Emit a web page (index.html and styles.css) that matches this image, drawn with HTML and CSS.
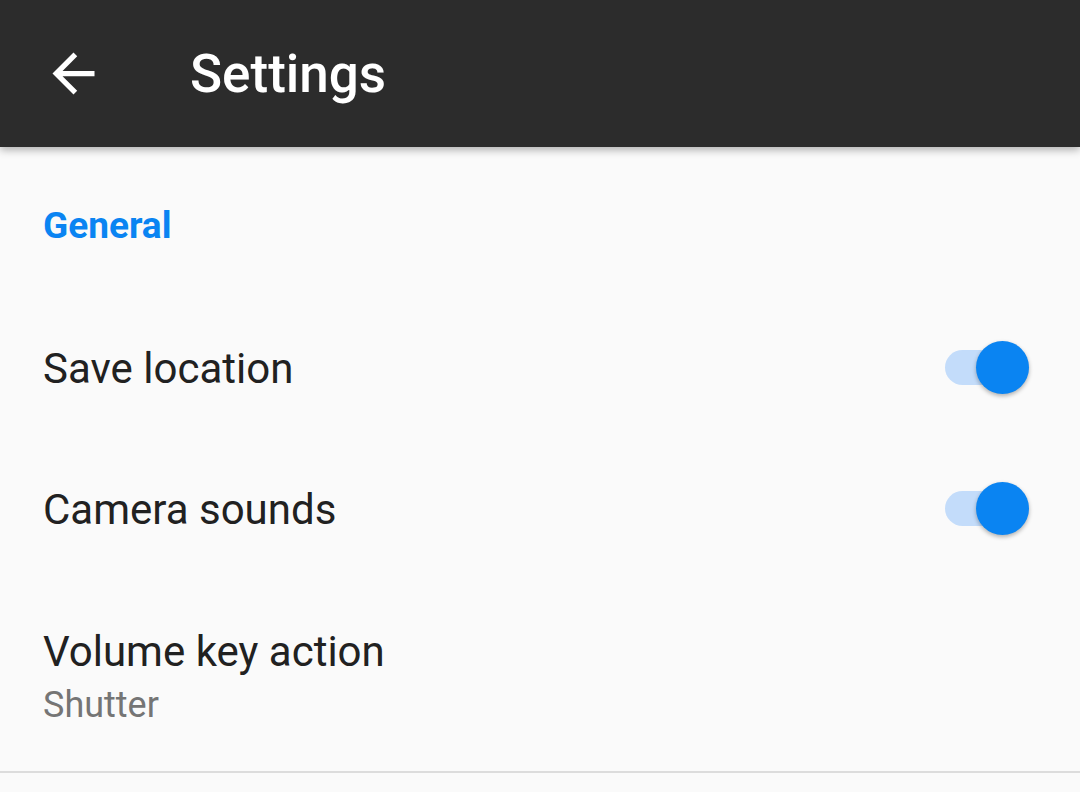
FILE: index.html
```html
<!DOCTYPE html>
<html lang="en">
<head>
    <meta charset="UTF-8">
    <meta name="viewport" content="width=device-width, initial-scale=1.0">
    <title>Settings</title>
    <link rel="stylesheet" href="styles.css">
</head>
<body>

<div class="toolbar">
    <button class="back-button">
        <svg viewBox="0 0 24 24" width="63" height="63">
            <path d="M20 11H7.83l5.59-5.59L12 4l-8 8 8 8 1.41-1.41L7.83 13H20v-2z" fill="#fff"/>
        </svg>
    </button>
    <h1 class="title">Settings</h1>
</div>

<div class="settings">
    <div class="category">General</div>

    <div class="pref">
        <div class="pref-text">
            <div class="pref-title">Save location</div>
        </div>
        <div class="switch on">
            <div class="track"></div>
            <div class="thumb"></div>
        </div>
    </div>

    <div class="pref">
        <div class="pref-text">
            <div class="pref-title">Camera sounds</div>
        </div>
        <div class="switch on">
            <div class="track"></div>
            <div class="thumb"></div>
        </div>
    </div>

    <div class="pref pref-tall">
        <div class="pref-text">
            <div class="pref-title">Volume key action</div>
            <div class="pref-summary">Shutter</div>
        </div>
    </div>

    <div class="divider"></div>
</div>

</body>
</html>
```

FILE: styles.css
```css
body {
    margin: 0;
    font-family: Roboto, "Noto Sans", Arial, sans-serif;
    background-color: #fafafa;
    overflow: hidden;
}

.toolbar {
    height: 147px;
    background-color: #2c2c2c;
    display: flex;
    align-items: center;
    box-shadow: 0 3px 8px rgba(0, 0, 0, 0.3);
    position: relative;
}

.back-button {
    width: 63px;
    height: 63px;
    margin-left: 42px;
    padding: 0;
    border: none;
    background: none;
    display: flex;
}

.title {
    margin: 2px 0 0 85px;
    color: #fff;
    font-size: 53px;
    font-weight: 500;
    line-height: 1;
}

.category {
    height: 151px;
    box-sizing: border-box;
    padding: 57px 0 0 43px;
    color: #0a84f2;
    font-size: 37px;
    font-weight: 700;
    line-height: 44px;
}

.pref {
    height: 141px;
    display: flex;
    align-items: center;
    padding: 0 51px 0 43px;
}

.pref-tall {
    height: 191px;
    align-items: flex-start;
    padding-top: 47px;
    box-sizing: border-box;
}

.pref-text {
    flex: 1;
}

.pref-title {
    color: #212121;
    font-size: 42px;
    line-height: 50px;
}

.pref-summary {
    color: #757575;
    font-size: 36px;
    line-height: 44px;
    margin-top: 6px;
}

.switch {
    position: relative;
    width: 84px;
    height: 53px;
    margin-top: -2px;
}

.switch .track {
    position: absolute;
    left: 0;
    right: 0;
    top: 9px;
    height: 35px;
    border-radius: 18px;
    background-color: #c3dcfa;
}

.switch .thumb {
    position: absolute;
    right: 0;
    top: 0;
    width: 53px;
    height: 53px;
    border-radius: 50%;
    background-color: #0a84f2;
    box-shadow: 0 2px 4px rgba(0, 0, 0, 0.3);
}

.divider {
    height: 2px;
    background-color: #dcdcdc;
}
```
